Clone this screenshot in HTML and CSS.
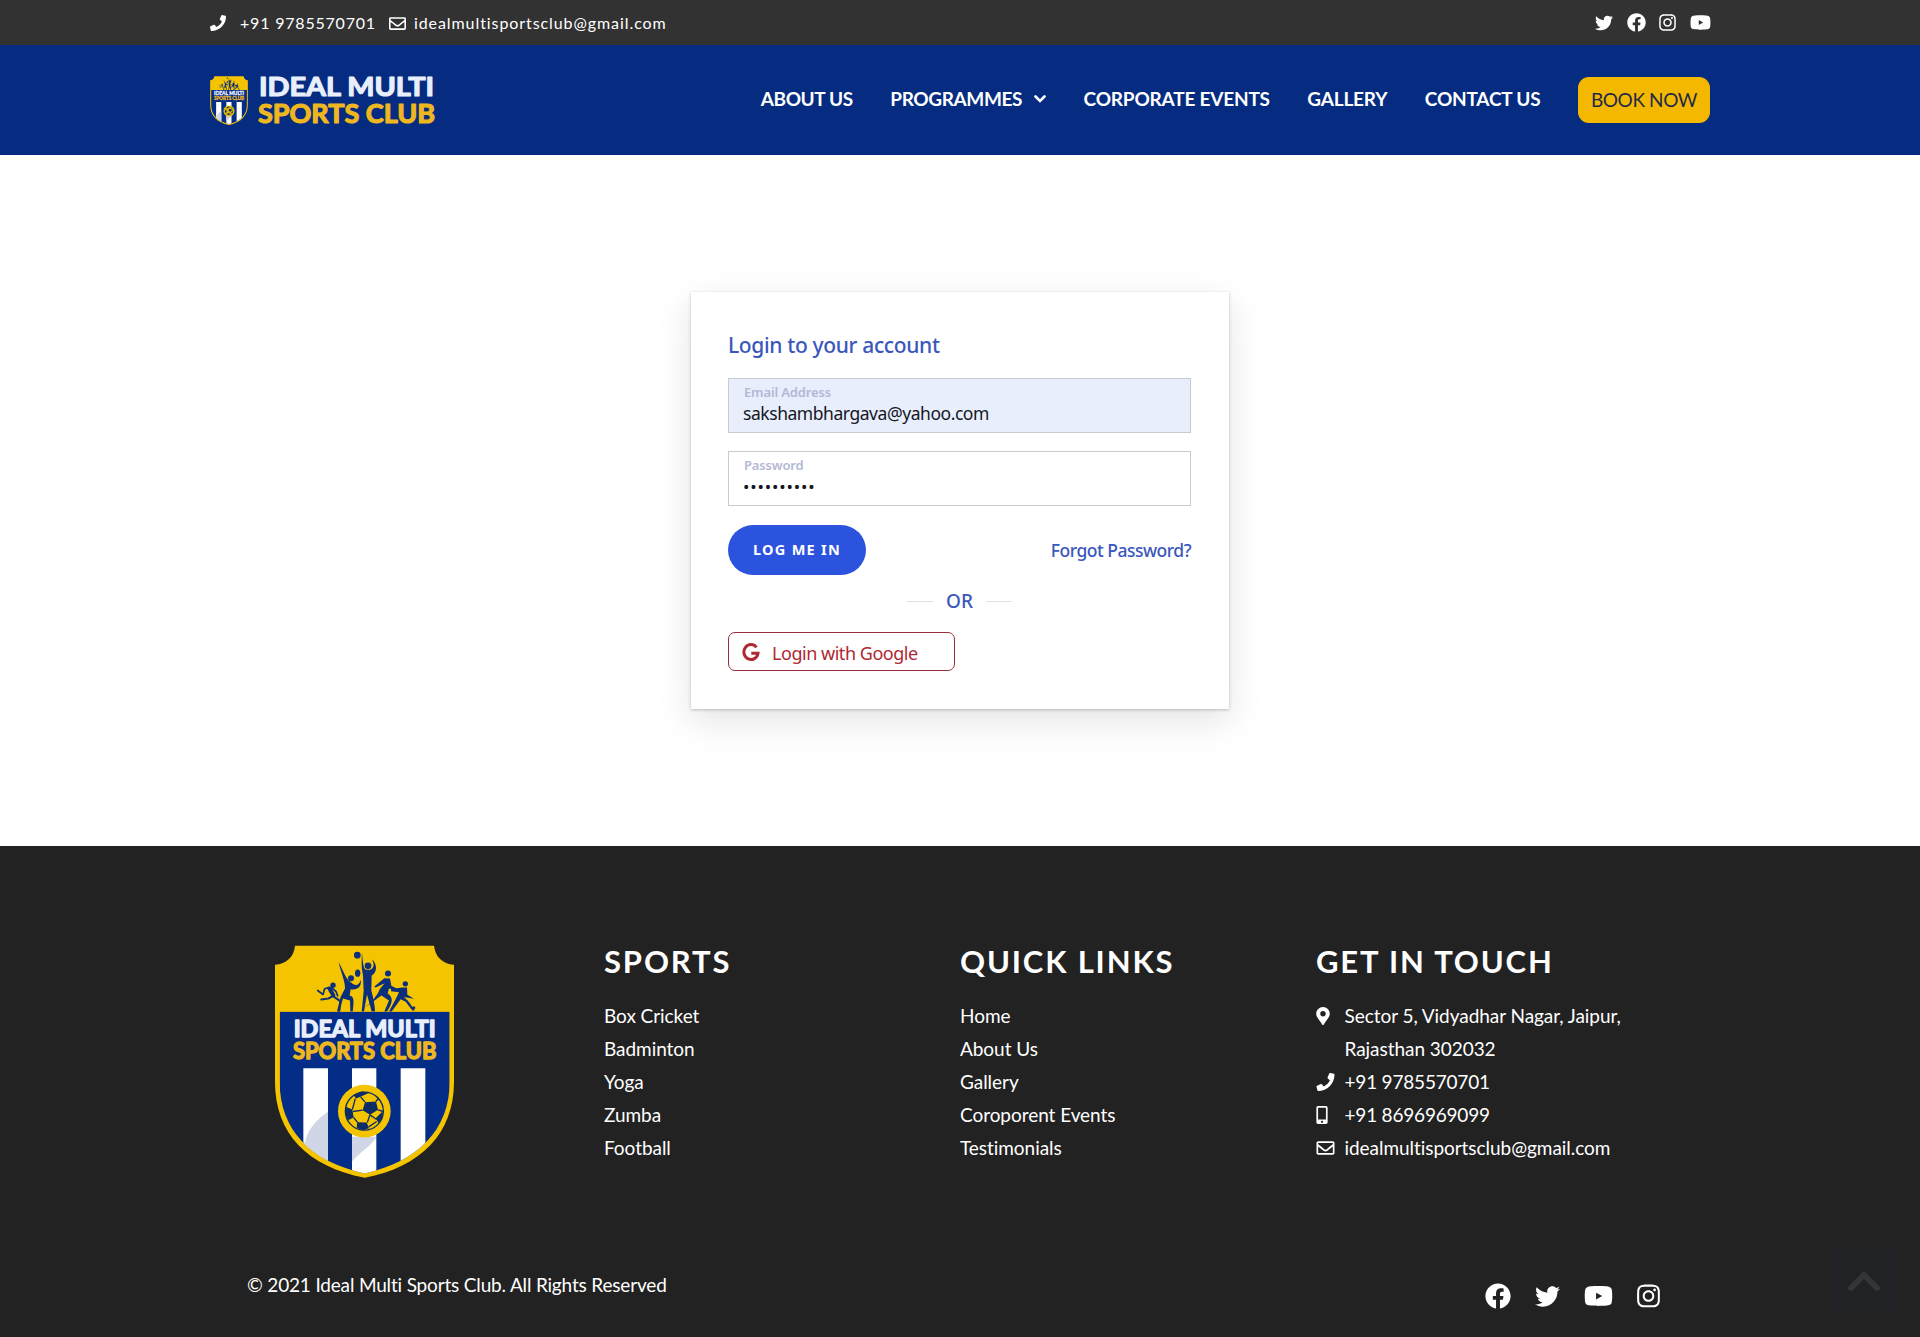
FILE: index.html
```html
<!DOCTYPE html>
<html lang="en">
<head>
<meta charset="utf-8">
<title>Ideal Multi Sports Club</title>
<link rel="stylesheet" href="styles.css">
</head>
<body>
<svg class="sprite" aria-hidden="true">
  <symbol id="phone" viewBox="0 0 512 512"><path d="M493.4 24.6l-104-24c-11.3-2.6-22.9 3.3-27.5 13.9l-48 112c-4.2 9.8-1.4 21.3 6.9 28l60.6 49.6c-36 76.7-98.9 140.5-177.2 177.2l-49.6-60.6c-6.8-8.3-18.2-11.1-28-6.9l-112 48C3.9 366.5-2 378.1.6 389.4l24 104C27.1 504.2 36.7 512 48 512c256.1 0 464-207.5 464-464 0-11.2-7.7-20.9-18.6-23.4z"/></symbol>
  <symbol id="envelope" viewBox="0 0 512 512"><path d="M464 64H48C21.49 64 0 85.49 0 112v288c0 26.51 21.49 48 48 48h416c26.51 0 48-21.49 48-48V112c0-26.51-21.49-48-48-48zm0 48v40.805c-22.422 18.259-58.168 46.651-134.587 106.49-16.841 13.247-50.201 45.072-73.413 44.701-23.208.375-56.579-31.459-73.413-44.701C106.18 199.465 70.425 171.067 48 152.805V112h416zM48 400V214.398c22.914 18.251 55.409 43.862 104.938 82.646 21.857 17.205 60.134 55.186 103.062 54.955 42.717.231 80.509-37.199 103.053-54.947 49.528-38.783 82.032-64.401 104.947-82.653V400H48z"/></symbol>
  <symbol id="twitter" viewBox="0 0 512 512"><path d="M459.37 151.716c.325 4.548.325 9.097.325 13.645 0 138.72-105.583 298.558-298.558 298.558-59.452 0-114.68-17.219-161.137-47.106 8.447.974 16.568 1.299 25.34 1.299 49.055 0 94.213-16.568 130.274-44.832-46.132-.975-84.792-31.188-98.112-72.772 6.498.974 12.995 1.624 19.818 1.624 9.421 0 18.843-1.3 27.614-3.573-48.081-9.747-84.143-51.98-84.143-102.985v-1.299c13.969 7.797 30.214 12.67 47.431 13.319-28.264-18.843-46.781-51.005-46.781-87.391 0-19.492 5.197-37.36 14.294-52.954 51.655 63.675 129.3 105.258 216.365 109.807-1.624-7.797-2.599-15.918-2.599-24.04 0-57.828 46.782-104.934 104.934-104.934 30.213 0 57.502 12.67 76.67 33.137 23.715-4.548 46.456-13.32 66.599-25.34-7.798 24.366-24.366 44.833-46.132 57.827 21.117-2.273 41.584-8.122 60.426-16.243-14.292 20.791-32.161 39.308-52.628 54.253z"/></symbol>
  <symbol id="facebook" viewBox="0 0 512 512"><path d="M504 256C504 119 393 8 256 8S8 119 8 256c0 123.78 90.69 226.38 209.25 245V327.69h-63V256h63v-54.64c0-62.15 37-96.48 93.67-96.48 27.14 0 55.52 4.84 55.52 4.84v61h-31.28c-30.8 0-40.41 19.12-40.41 38.73V256h68.78l-11 71.69h-57.78V501C413.31 482.38 504 379.78 504 256z"/></symbol>
  <symbol id="instagram" viewBox="0 0 448 512"><path d="M224.1 141c-63.6 0-114.9 51.3-114.9 114.9s51.3 114.9 114.9 114.9S339 319.5 339 255.9 287.7 141 224.1 141zm0 189.6c-41.1 0-74.7-33.5-74.7-74.7s33.5-74.7 74.7-74.7 74.7 33.5 74.7 74.7-33.6 74.7-74.7 74.7zm146.4-194.3c0 14.9-12 26.8-26.8 26.8-14.9 0-26.8-12-26.8-26.8s12-26.8 26.8-26.8 26.8 12 26.8 26.8zm76.1 27.2c-1.7-35.9-9.9-67.7-36.2-93.9-26.2-26.2-58-34.4-93.9-36.2-37-2.1-147.9-2.1-184.9 0-35.8 1.7-67.6 9.9-93.9 36.1s-34.4 58-36.2 93.9c-2.1 37-2.1 147.9 0 184.9 1.7 35.9 9.9 67.7 36.2 93.9s58 34.4 93.9 36.2c37 2.1 147.9 2.1 184.9 0 35.9-1.7 67.7-9.9 93.9-36.2 26.2-26.2 34.4-58 36.2-93.9 2.1-37 2.1-147.8 0-184.8zM398.8 388c-7.8 19.6-22.9 34.7-42.6 42.6-29.5 11.7-99.5 9-132.1 9s-102.7 2.6-132.1-9c-19.6-7.8-34.7-22.9-42.6-42.6-11.7-29.5-9-99.5-9-132.1s-2.6-102.7 9-132.1c7.8-19.6 22.9-34.7 42.6-42.6 29.5-11.7 99.5-9 132.1-9s102.7-2.6 132.1 9c19.6 7.8 34.7 22.9 42.6 42.6 11.7 29.5 9 99.5 9 132.1s2.7 102.7-9 132.1z"/></symbol>
  <symbol id="youtube" viewBox="0 0 576 512"><path fill-rule="evenodd" d="M549.655 124.083c-6.281-23.65-24.787-42.276-48.284-48.597C458.781 58 288 58 288 58S117.22 58 74.629 75.486c-23.497 6.322-42.003 24.947-48.284 48.597-11.412 42.867-11.412 132.305-11.412 132.305s0 89.438 11.412 132.305c6.281 23.65 24.787 41.5 48.284 47.821C117.22 454 288 454 288 454s170.78 0 213.371-17.486c23.497-6.321 42.003-24.171 48.284-47.821 11.412-42.867 11.412-132.305 11.412-132.305s0-89.438-11.412-132.305zM240 326V190l122 68z"/></symbol>
  <symbol id="marker" viewBox="0 0 384 512"><path d="M172.268 501.67C26.97 291.031 0 269.413 0 192 0 85.961 85.961 0 192 0s192 85.961 192 192c0 77.413-26.97 99.031-172.268 309.67-9.535 13.774-29.93 13.773-39.464 0zM192 272c44.183 0 80-35.817 80-80s-35.817-80-80-80-80 35.817-80 80 35.817 80 80 80z"/></symbol>
  <symbol id="mobile" viewBox="0 0 320 512"><path d="M272 0H48C21.5 0 0 21.5 0 48v416c0 26.500 21.500 48 48 48h224c26.500 0 48-21.500 48-48V48c0-26.500-21.500-48-48-48zM160 480c-17.700 0-32-14.300-32-32s14.300-32 32-32 32 14.300 32 32-14.300 32-32 32zm112-108c0 6.600-5.400 12-12 12H60c-6.600 0-12-5.400-12-12V60c0-6.600 5.400-12 12-12h200c6.600 0 12 5.400 12 12v312z"/></symbol>
  <symbol id="crest" viewBox="43 45 537 698">
    <clipPath id="field"><path d="M57 244H567V455C567 600 470 695 312 730C150 695 57 600 57 455Z"/></clipPath>
    <path fill="#f5c400" d="M103 47H520C524 80 545 102 580 104V455C580 610 480 710 312 743C140 710 43 610 43 455V104C78 102 100 80 103 47Z"/>
    <g clip-path="url(#field)">
      <path fill="#032d86" d="M43 244H580V743H43Z"/>
      <path fill="#fff" d="M128 414H202V743H128ZM274 414H347V743H274ZM420 414H494V743H420Z"/>
      <path fill="#d0d6e6" d="M128 660C138 600 160 575 202 545V743H128ZM274 694V620H347C340 640 300 665 274 694Z"/>
    </g>
    <circle cx="311" cy="543" r="79" fill="#f5c400"/>
    <circle cx="311" cy="543" r="57" fill="#f5c400" stroke="#0c2c66" stroke-width="4"/>
    <g fill="#0c2c66">
      <path d="M313 516L346 514 352 539 328 554 306 540ZM278 495L304 484 326 488 306 497 287 505ZM256 530L275 538 279 562 262 570 254 550ZM290 576L318 577 325 594 306 600 288 593ZM345 564L366 543 366 560 354 579ZM347 495L362 514 352 508Z"/>
    </g>
    <path fill="none" stroke="#0c2c66" stroke-width="4" d="M313 516L300 500M346 514L354 503M352 539L368 544M328 554L320 577M306 540L277 544M275 538L284 505M279 562L292 578M324 590L348 574M328 554L348 568"/>
    <g fill="#0c2f7c">
      <circle cx="290" cy="75" r="10"/><circle cx="322" cy="107" r="10"/><circle cx="271" cy="144" r="9"/><ellipse cx="291" cy="129" rx="8" ry="11"/><circle cx="382" cy="130" r="9"/><circle cx="434" cy="161" r="8"/><circle cx="217" cy="165" r="8"/><circle cx="459" cy="233" r="5"/>
      <path d="M304 66C307 100 308 120 319 119C338 120 344 108 334 87C354 107 346 129 333 136L332 180C338 205 343 225 343 244H333L319 193 310 244H303L309 183 307 135C301 112 303 90 304 66Z"/>
      <path d="M234 96C248 120 254 145 269 155C285 172 296 165 300 149C304 171 288 181 270 177L267 196C281 198 280 215 276 244H269L268 211 247 205 236 244H229L240 200 253 175C253 150 240 125 234 96Z"/>
      <path d="M371 144L388 145 392 167 412 177 411 182 385 175 381 190C400 202 395 220 379 244H371L385 211 362 196 308 236C335 215 351 194 357 177L372 159 345 172 341 169Z"/>
      <path d="M424 172L439 172 440 194 460 206 438 202 429 201C447 212 452 228 463 241H455L435 215 420 207 393 244H385L406 205 415 186 391 183V177Z"/>
    </g>
    <g fill="none" stroke="#0c2f7c" stroke-linecap="round" stroke-linejoin="round">
      <path stroke-width="12" d="M206 175L218 195"/>
      <path stroke-width="5" d="M204 172L192 176 187 193 171 181M212 172L226 184 231 197"/>
      <path stroke-width="6" d="M217 198L203 205 182 208M220 200L239 213 236 242"/>
    </g>
    <g class="club-name" stroke-width="4">
      <text class="club-top" x="99" y="320" font-size="66" textLength="426" lengthAdjust="spacingAndGlyphs">IDEAL MULTI</text>
      <text class="club-bottom" x="97" y="386" font-size="66" textLength="430" lengthAdjust="spacingAndGlyphs">SPORTS CLUB</text>
    </g>
  </symbol>
</svg>

<div class="topbar">
  <div class="container topbar-row">
    <div class="contact">
      <svg class="icon i-phone"><use href="#phone"/></svg><span class="tel">+91 9785570701</span>
      <svg class="icon i-mail"><use href="#envelope"/></svg><span class="mail">idealmultisportsclub@gmail.com</span>
    </div>
    <div class="social-top">
      <svg class="s18"><use href="#twitter"/></svg>
      <svg class="s19"><use href="#facebook"/></svg>
      <svg class="s16"><use href="#instagram"/></svg>
      <svg class="s21"><use href="#youtube"/></svg>
    </div>
  </div>
</div>

<header class="header">
  <div class="container header-row">
    <a class="brand">
      <svg class="brand-crest"><use href="#crest"/></svg>
      <svg class="brand-name club-name" viewBox="0 0 180 54" stroke-width="1.2">
        <text class="club-top" x="2" y="23" font-size="26.500" textLength="175" lengthAdjust="spacingAndGlyphs">IDEAL MULTI</text>
        <text class="club-bottom" x="1" y="50" font-size="26.500" textLength="177" lengthAdjust="spacingAndGlyphs">SPORTS CLUB</text>
      </svg>
    </a>
    <nav class="nav">
      <a class="tight">ABOUT US</a>
      <a class="tight">PROGRAMMES<svg class="caret" viewBox="0 0 12 8"><path d="M1.500 1.500L6 6l4.500-4.500"/></svg></a>
      <a>CORPORATE EVENTS</a>
      <a>GALLERY</a>
      <a>CONTACT US</a>
      <a class="book">BOOK NOW</a>
    </nav>
  </div>
</header>

<main class="main">
  <form class="card">
    <h1>Login to your account</h1>
    <div class="field filled"><label>Email Address</label><span class="value">sakshambhargava@yahoo.com</span></div>
    <div class="field"><label>Password</label><span class="value dots">••••••••••</span></div>
    <div class="actions"><span class="login">LOG ME IN</span><a class="forgot">Forgot Password?</a></div>
    <div class="or"><span>OR</span></div>
    <a class="google"><svg viewBox="0 0 18 19"><path d="M14.500 4.300A7.100 7.500 0 1 0 16 10.200H9.300"/></svg><span>Login with Google</span></a>
  </form>
</main>

<footer class="footer">
  <div class="cols">
    <div class="crest-col"><svg class="crest"><use href="#crest"/></svg></div>
    <div>
      <h2>SPORTS</h2>
      <ul><li>Box Cricket</li><li>Badminton</li><li>Yoga</li><li>Zumba</li><li>Football</li></ul>
    </div>
    <div>
      <h2>QUICK LINKS</h2>
      <ul><li>Home</li><li>About Us</li><li>Gallery</li><li>Coroporent Events</li><li>Testimonials</li></ul>
    </div>
    <div>
      <h2>GET IN TOUCH</h2>
      <ul class="touch">
        <li><svg class="t-marker"><use href="#marker"/></svg><span>Sector 5, Vidyadhar Nagar, Jaipur,<br>Rajasthan 302032</span></li>
        <li class="number"><svg class="t-wide"><use href="#phone"/></svg><span>+91 9785570701</span></li>
        <li class="number"><svg class="t-mobile"><use href="#mobile"/></svg><span>+91 8696969099</span></li>
        <li><svg class="t-wide"><use href="#envelope"/></svg><span>idealmultisportsclub@gmail.com</span></li>
      </ul>
    </div>
  </div>
  <div class="bottom">
    <p>© 2021 Ideal Multi Sports Club. All Rights Reserved</p>
    <div class="social-bottom">
      <svg class="b26"><use href="#facebook"/></svg>
      <svg class="b25"><use href="#twitter"/></svg>
      <svg class="b29"><use href="#youtube"/></svg>
      <svg class="b23"><use href="#instagram"/></svg>
    </div>
  </div>
</footer>
<a class="to-top"><svg viewBox="0 0 34 22"><path d="M4 18L17 5l13 13"/></svg></a>
</body>
</html>
```
FILE: styles.css
```css
* { box-sizing: border-box; }
body { margin: 0; background: #fff; font-family: Lato, sans-serif; color: #fff; }
h1, h2, p, ul { margin: 0; padding: 0; }
ul { list-style: none; }
svg { display: block; flex: none; fill: currentColor; }
.sprite { position: absolute; width: 0; height: 0; }
.container { width: 1500px; margin: 0 auto; }

.topbar { height: 45px; background: #323232; }
.topbar-row { height: 45px; display: flex; align-items: center; justify-content: space-between; }
.contact { display: flex; align-items: center; font-size: 16px; letter-spacing: .8px; line-height: 20px; padding-top: 1px; }
.mail { letter-spacing: .92px; }
.i-phone { width: 16px; height: 16px; margin-right: 14px; }
.i-mail { width: 17px; height: 17px; margin: 0 8px 0 13px; }
.social-top { display: flex; align-items: center; gap: 13.500px; margin-right: -.5px; }
.s18 { width: 18px; height: 18px; }
.s19 { width: 19px; height: 19px; }
.s16 { width: 17px; height: 19px; }
.s21 { width: 21px; height: 19px; }

.header { height: 110px; background: #052c80; }
.header-row { height: 110px; display: flex; align-items: center; justify-content: space-between; }
.brand { display: flex; align-items: center; gap: 9px; }
.brand-crest { width: 38px; height: 49px; }
.brand-name { width: 180px; height: 54px; overflow: visible; }
.club-name { font-family: Lato, sans-serif; font-weight: 700; stroke-linejoin: round; }
.club-top { fill: #e9eefb; stroke: #e9eefb; }
.club-bottom { fill: #eeb71f; stroke: #eeb71f; }
.nav { display: flex; align-items: center; gap: 37.500px; font-size: 19px; font-weight: 700; line-height: 22px; letter-spacing: -.2px; }
.nav a { display: flex; align-items: center; padding-bottom: 2px; }
.nav .tight { letter-spacing: -.38px; }
.caret { width: 12px; height: 8px; margin-left: 12px; fill: none; stroke: #fff; stroke-width: 2.600; stroke-linecap: round; }
.nav .book { height: 46px; width: 132px; padding: 0; justify-content: center; border-radius: 11px; background: #f5b800; color: #1f2a4b; font-weight: 400; letter-spacing: -.4px; }

.main { height: 691px; padding-top: 137px; }
.card { width: 538px; height: 417px; margin: 0 auto; padding: 37px 38px 0 37px; background: #fff; box-shadow: 0 1px 3px rgba(0,0,0,.22), 0 12px 34px rgba(0,0,0,.11); font-family: "Noto Sans", sans-serif; color: #3a57bd; }
.card h1 { font-size: 21px; font-weight: 500; line-height: 32px; letter-spacing: -.35px; margin-bottom: 17px; }
.field { height: 55px; border: 1px solid #c8cbd2; margin-bottom: 18px; padding: 5px 14px; display: flex; flex-direction: column; }
.filled { background: #e8eefc; }
.field label { font-size: 13px; line-height: 17px; font-weight: 600; letter-spacing: -.15px; color: #b2b8d6; padding-left: 1px; }
.value { font-size: 17.500px; line-height: 25px; letter-spacing: -.45px; color: #15171f; }
.dots { font-size: 17px; letter-spacing: .85px; }
.actions { display: flex; align-items: center; justify-content: space-between; height: 50px; margin-top: 19px; }
.login { width: 138px; height: 50px; border-radius: 25px; background: #2c53de; color: #fff; font-size: 14.500px; font-weight: 700; letter-spacing: 1.300px; line-height: 49px; text-align: center; }
.forgot { font-size: 17.500px; font-weight: 500; letter-spacing: -.5px; }
.or { display: flex; align-items: center; justify-content: center; gap: 13px; height: 26px; margin-top: 13px; font-size: 19px; font-weight: 500; }
.or::before, .or::after { content: ""; width: 26px; height: 1px; background: #dfe1e5; }
.google { display: flex; align-items: center; width: 227px; height: 39px; margin-top: 18px; padding: 0 13px; border: 1px solid #96303a; border-radius: 7px; color: #ae2932; font-size: 18px; letter-spacing: -.47px; }
.google svg { width: 18px; height: 19px; margin: 1px 12px 0 0; fill: none; stroke: currentColor; stroke-width: 3; }
.google span { padding-top: 2px; }

.footer { height: 491px; background: #222; padding: 99px 248px 0; font-size: 19px; }
.cols { display: grid; grid-template-columns: repeat(4, 356px); height: 300px; }
.crest-col { padding-left: 26.500px; }
.crest { width: 179px; height: 233px; }
.footer h2 { font-size: 31px; line-height: 32px; font-weight: 700; letter-spacing: 1.850px; margin-bottom: 22px; }
.footer li { line-height: 33px; letter-spacing: -.05px; white-space: nowrap; }
.footer .number { letter-spacing: -.2px; }
.touch li { display: grid; grid-template-columns: 28.500px 1fr; align-items: start; }
.touch svg { height: 18px; margin-top: 8px; }
.t-marker { width: 14px; }
.t-wide { width: 19px; }
.t-mobile { width: 12px; }
.bottom { display: flex; justify-content: space-between; }
.bottom p { line-height: 24px; margin: 28px 0 0 -1px; letter-spacing: -.17px; }
.social-bottom { display: flex; gap: 24px; align-items: center; margin: 37px 12.500px 0 0; height: 28px; }
.b26 { width: 26px; height: 26px; }
.b25 { width: 25px; height: 25px; }
.b29 { width: 29px; height: 26px; }
.b23 { width: 23px; height: 26px; }
.to-top { position: absolute; right: 25px; bottom: 25px; width: 63px; height: 63px; display: flex; align-items: center; justify-content: center; background: #212225; }
.to-top svg { width: 34px; height: 22px; fill: none; stroke: #343536; stroke-width: 6; stroke-linecap: round; }
```
